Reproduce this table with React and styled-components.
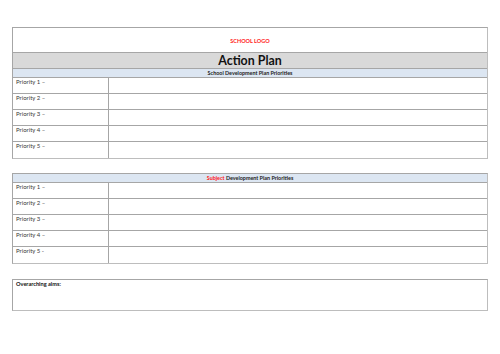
import React from "react";
import styled, { createGlobalStyle } from "styled-components";

const Global = createGlobalStyle`
  html, body { margin: 0; padding: 0; background: #fff; }
  body { font-family: Lato, "Open Sans", "Liberation Sans", sans-serif; color: #1a1a1a; }
`;

const Page = styled.div`
  width: 500px;
  height: 354px;
  box-sizing: border-box;
  padding: 27px 12px 0 12px;
  display: flex;
  flex-direction: column;
`;

const Table = styled.div`
  border: 1px solid #a6a6a6;
  border-right-color: #bdbdbd;
  border-bottom-color: #bdbdbd;
  display: flex;
  flex-direction: column;
  margin-bottom: ${(p) => p.$gap || 0}px;
`;

const LogoRow = styled.div`
  height: 25px;
  box-sizing: border-box;
  padding-top: 1px;
  border-bottom: 1px solid #a6a6a6;
  display: flex;
  align-items: center;
  justify-content: center;
  color: #ff2020;
  font-weight: 700;
  font-size: 5.5px;
`;

const TitleRow = styled.div`
  height: 16px;
  box-sizing: border-box;
  background: #d9d9d9;
  border-bottom: 1px solid #a6a6a6;
  display: flex;
  align-items: center;
  justify-content: center;
  font-weight: 700;
  font-size: 12.4px;
  color: #111;
`;

const HeadRow = styled.div`
  height: 9px;
  box-sizing: border-box;
  background: #dce6f2;
  border-bottom: 1px solid #a6a6a6;
  display: flex;
  align-items: center;
  justify-content: center;
  font-weight: 700;
  font-size: 5.4px;
  color: #222;
`;

const Red = styled.span`
  color: #ff2020;
`;

const Row = styled.div`
  height: 16px;
  box-sizing: border-box;
  display: grid;
  grid-template-columns: 96px 1fr;
  border-bottom: ${(p) => (p.$last ? "none" : "1px solid #a6a6a6")};
`;

const Label = styled.div`
  border-right: 1px solid #a6a6a6;
  font-size: 6px;
  line-height: 8px;
  color: #3a3a3a;
  padding: 0 0 0 3px;
`;

const Cell = styled.div``;

const AimsBox = styled.div`
  height: 32px;
  box-sizing: border-box;
  border: 1px solid #a6a6a6;
  border-right-color: #bdbdbd;
  border-bottom-color: #bdbdbd;
  font-size: 5.6px;
  line-height: 8px;
  font-weight: 700;
  color: #111;
  padding: 0 0 0 3px;
`;

const labels = ["Priority 1 –", "Priority 2 –", "Priority 3 –", "Priority 4 –", "Priority 5 –"];
const labels2 = ["Priority 1 –", "Priority 2 –", "Priority 3 –", "Priority 4 –", "Priority 5 -"];

const PriorityRows = ({ items }) =>
  items.map((t, i) => (
    <Row key={i} $last={i === items.length - 1}>
      <Label>{t}</Label>
      <Cell />
    </Row>
  ));

export default function App() {
  return (
    <>
      <Global />
      <Page>
        <Table $gap={14}>
          <LogoRow>SCHOOL LOGO</LogoRow>
          <TitleRow>Action Plan</TitleRow>
          <HeadRow>School Development Plan Priorities</HeadRow>
          <PriorityRows items={labels} />
        </Table>
        <Table $gap={15}>
          <HeadRow>
            <Red>Subject</Red>&nbsp;Development Plan Priorities
          </HeadRow>
          <PriorityRows items={labels2} />
        </Table>
        <AimsBox>Overarching aims:</AimsBox>
      </Page>
    </>
  );
}
